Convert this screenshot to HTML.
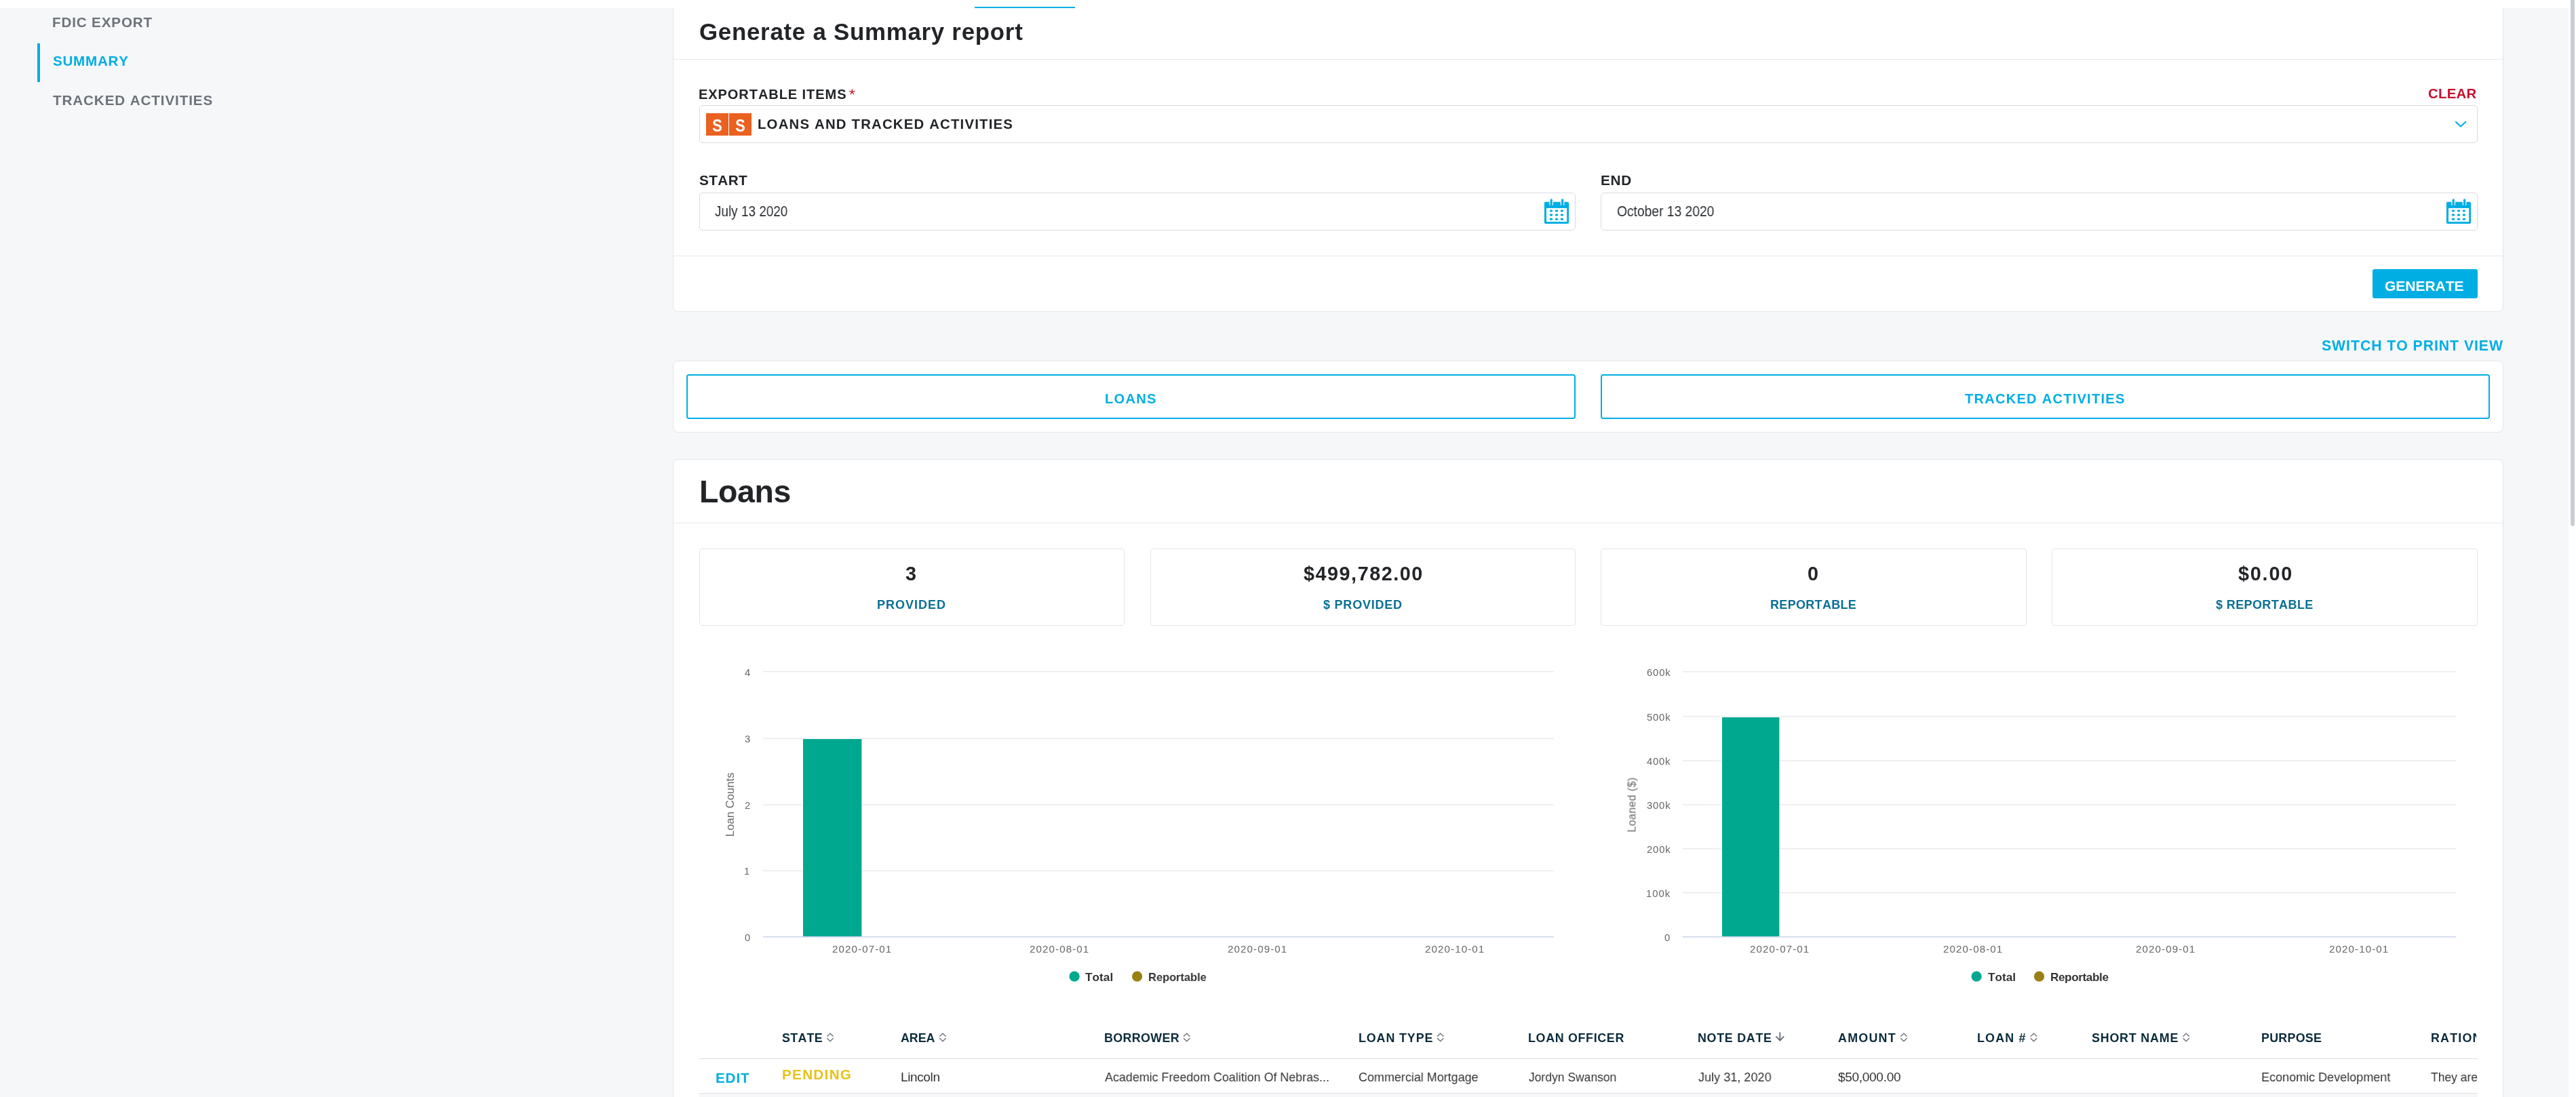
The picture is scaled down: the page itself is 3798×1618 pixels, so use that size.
<!DOCTYPE html>
<html><head><meta charset="utf-8"><title>Summary report</title>
<style>
html,body{margin:0;padding:0;}
body{width:3798px;height:1618px;overflow:hidden;position:relative;background:#f6f7f9;font-family:"Liberation Sans",sans-serif;}
.b{position:absolute;box-sizing:border-box;}
.t{position:absolute;white-space:nowrap;font-kerning:none;will-change:transform;}
</style></head><body>
<div class="b" style="left:0px;top:0px;width:3787px;height:12px;background:#fff;z-index:5"></div>
<div class="b" style="left:1437px;top:10px;width:148px;height:2px;background:#00aee3;z-index:6"></div>
<div class="b" style="left:3787px;top:0px;width:11px;height:1618px;background:#fff;z-index:5"></div>
<div class="b" style="left:3790px;top:0px;width:6px;height:776px;background:#c8cdd4;border-radius:0 0 3px 3px;z-index:6"></div>
<div class="b" style="left:55px;top:64px;width:4px;height:57px;background:#00aee3"></div>
<div class="t" style="left:77.32px;top:22.82px;font-size:20.64px;line-height:20.64px;letter-spacing:0.855px;font-weight:700;color:#6d737a;">FDIC EXPORT</div>
<div class="t" style="left:78.11px;top:79.72px;font-size:20.64px;line-height:20.64px;letter-spacing:0.732px;font-weight:700;color:#00aee3;">SUMMARY</div>
<div class="t" style="left:78.47px;top:137.72px;font-size:20.64px;line-height:20.64px;letter-spacing:0.893px;font-weight:700;color:#6d737a;">TRACKED ACTIVITIES</div>
<div class="b" style="left:992px;top:-20px;width:2699px;height:480px;background:#fff;border:1px solid #e3e5e9;border-radius:8px"></div>
<div class="t" style="left:1030.57px;top:30.26px;font-size:34.88px;line-height:34.88px;letter-spacing:0.724px;font-weight:700;color:#222427;">Generate a Summary report</div>
<div class="b" style="left:993px;top:87px;width:2697px;height:1px;background:#e6e8eb"></div>
<div class="t" style="left:1029.96px;top:128.82px;font-size:20.06px;line-height:20.06px;letter-spacing:0.912px;font-weight:700;color:#222427;">EXPORTABLE ITEMS</div>
<svg class="b" style="left:0;top:0" width="3798" height="200"><line x1="1256.30" y1="135.60" x2="1256.30" y2="131.70" stroke="#c8102e" stroke-width="1.25" stroke-linecap="round"/><line x1="1256.30" y1="135.60" x2="1260.01" y2="134.39" stroke="#c8102e" stroke-width="1.25" stroke-linecap="round"/><line x1="1256.30" y1="135.60" x2="1258.59" y2="138.76" stroke="#c8102e" stroke-width="1.25" stroke-linecap="round"/><line x1="1256.30" y1="135.60" x2="1254.01" y2="138.76" stroke="#c8102e" stroke-width="1.25" stroke-linecap="round"/><line x1="1256.30" y1="135.60" x2="1252.59" y2="134.39" stroke="#c8102e" stroke-width="1.25" stroke-linecap="round"/></svg>
<div class="t" style="left:3580.17px;top:127.97px;font-size:20.35px;line-height:20.35px;letter-spacing:0.291px;font-weight:700;color:#c8102e;">CLEAR</div>
<div class="b" style="left:1031px;top:155px;width:2622px;height:56px;background:#fff;border:1px solid #d7dbe0;border-radius:5px"></div>
<div class="b" style="left:1041px;top:167px;width:33px;height:33px;background:#ea6120"></div>
<div class="b" style="left:1075px;top:167px;width:33px;height:33px;background:#ea6120"></div>
<div class="t" style="left:1050.17px;top:173.06px;font-size:25.44px;line-height:25.44px;font-weight:700;color:#fff;transform-origin:0.73px 0;transform:scaleX(0.866)">S</div>
<div class="t" style="left:1084.17px;top:173.06px;font-size:25.44px;line-height:25.44px;font-weight:700;color:#fff;transform-origin:0.73px 0;transform:scaleX(0.866)">S</div>
<div class="t" style="left:1117.24px;top:172.97px;font-size:20.35px;line-height:20.35px;letter-spacing:1.195px;font-weight:700;color:#222427;">LOANS AND TRACKED ACTIVITIES</div>
<svg class="b" style="left:3615px;top:174px" width="26" height="18"><polyline points="6,6 13,12.5 20,6" fill="none" stroke="#00aee3" stroke-width="2.2" stroke-linecap="round" stroke-linejoin="round"/></svg>
<div class="t" style="left:1030.80px;top:255.80px;font-size:20.79px;line-height:20.79px;letter-spacing:0.361px;font-weight:700;color:#222427;">START</div>
<div class="t" style="left:2359.91px;top:255.80px;font-size:20.79px;line-height:20.79px;letter-spacing:0.739px;font-weight:700;color:#222427;">END</div>
<div class="b" style="left:1031px;top:284px;width:1292px;height:56px;background:#fff;border:1px solid #d7dbe0;border-radius:5px"></div>
<div class="b" style="left:2360px;top:284px;width:1293px;height:56px;background:#fff;border:1px solid #d7dbe0;border-radius:5px"></div>
<div class="t" style="left:1054.40px;top:301.33px;font-size:21.22px;line-height:21.22px;font-weight:400;color:#2a2d31;transform-origin:0 0;transform:scaleX(0.8919);">July 13 2020</div>
<div class="t" style="left:2383.69px;top:301.33px;font-size:21.22px;line-height:21.22px;font-weight:400;color:#2a2d31;transform-origin:0 0;transform:scaleX(0.9068);">October 13 2020</div>
<svg class="b" style="left:2276px;top:292px" width="40" height="40" viewBox="0 0 40 40">
<path d="M3,5.8 L35,5.8 Q37.1,5.8 37.1,7.9 L37.1,35.9 Q37.1,38 35,38 L3,38 Q0.9,38 0.9,35.9 L0.9,7.9 Q0.9,5.8 3,5.8 Z M4,15 L4,35 L34.2,35 L34.2,15 Z" fill="#00aee3" fill-rule="evenodd"/>
<rect x="8.4" y="5" width="5.6" height="5.8" fill="#fff"/>
<rect x="24.8" y="5" width="5.6" height="5.8" fill="#fff"/>
<path d="M9.6,12 L9.6,2.9 Q9.6,1.3 11.2,1.3 Q12.8,1.3 12.8,2.9 L12.8,12 Z" fill="#00aee3"/>
<path d="M26,12 L26,2.9 Q26,1.3 27.6,1.3 Q29.2,1.3 29.2,2.9 L29.2,12 Z" fill="#00aee3"/>
<ellipse cx="11" cy="18.9" rx="2.3" ry="1.7" fill="#00aee3"/><ellipse cx="19" cy="18.9" rx="2.3" ry="1.7" fill="#00aee3"/><ellipse cx="26.9" cy="18.9" rx="2.3" ry="1.7" fill="#00aee3"/><ellipse cx="11" cy="25" rx="2.3" ry="1.7" fill="#00aee3"/><ellipse cx="19" cy="25" rx="2.3" ry="1.7" fill="#00aee3"/><ellipse cx="26.9" cy="25" rx="2.3" ry="1.7" fill="#00aee3"/><ellipse cx="11" cy="31.2" rx="2.3" ry="1.7" fill="#00aee3"/><ellipse cx="19" cy="31.2" rx="2.3" ry="1.7" fill="#00aee3"/><ellipse cx="26.9" cy="31.2" rx="2.3" ry="1.7" fill="#00aee3"/></svg>
<svg class="b" style="left:3606px;top:292px" width="40" height="40" viewBox="0 0 40 40">
<path d="M3,5.8 L35,5.8 Q37.1,5.8 37.1,7.9 L37.1,35.9 Q37.1,38 35,38 L3,38 Q0.9,38 0.9,35.9 L0.9,7.9 Q0.9,5.8 3,5.8 Z M4,15 L4,35 L34.2,35 L34.2,15 Z" fill="#00aee3" fill-rule="evenodd"/>
<rect x="8.4" y="5" width="5.6" height="5.8" fill="#fff"/>
<rect x="24.8" y="5" width="5.6" height="5.8" fill="#fff"/>
<path d="M9.6,12 L9.6,2.9 Q9.6,1.3 11.2,1.3 Q12.8,1.3 12.8,2.9 L12.8,12 Z" fill="#00aee3"/>
<path d="M26,12 L26,2.9 Q26,1.3 27.6,1.3 Q29.2,1.3 29.2,2.9 L29.2,12 Z" fill="#00aee3"/>
<ellipse cx="11" cy="18.9" rx="2.3" ry="1.7" fill="#00aee3"/><ellipse cx="19" cy="18.9" rx="2.3" ry="1.7" fill="#00aee3"/><ellipse cx="26.9" cy="18.9" rx="2.3" ry="1.7" fill="#00aee3"/><ellipse cx="11" cy="25" rx="2.3" ry="1.7" fill="#00aee3"/><ellipse cx="19" cy="25" rx="2.3" ry="1.7" fill="#00aee3"/><ellipse cx="26.9" cy="25" rx="2.3" ry="1.7" fill="#00aee3"/><ellipse cx="11" cy="31.2" rx="2.3" ry="1.7" fill="#00aee3"/><ellipse cx="19" cy="31.2" rx="2.3" ry="1.7" fill="#00aee3"/><ellipse cx="26.9" cy="31.2" rx="2.3" ry="1.7" fill="#00aee3"/></svg>
<div class="b" style="left:993px;top:377px;width:2697px;height:1px;background:#e6e8eb"></div>
<div class="b" style="left:3498px;top:397px;width:155px;height:43px;background:#00aee3;border-radius:3px"></div>
<div class="t" style="left:3515.94px;top:410.56px;font-size:21.08px;line-height:21.08px;letter-spacing:-0.088px;font-weight:700;color:#fff;">GENERATE</div>
<div class="t" style="left:3422.59px;top:498.53px;font-size:21.22px;line-height:21.22px;letter-spacing:0.962px;font-weight:700;color:#00aee3;">SWITCH TO PRINT VIEW</div>
<div class="b" style="left:992px;top:532px;width:2699px;height:106px;background:#fff;border:1px solid #e3e5e9;border-radius:8px"></div>
<div class="b" style="left:1012px;top:552px;width:1311px;height:66px;border:2px solid #00aee3;border-radius:4px"></div>
<div class="b" style="left:2360px;top:552px;width:1311px;height:66px;border:2px solid #00aee3;border-radius:4px"></div>
<div class="t" style="left:1628.66px;top:577.92px;font-size:20.06px;line-height:20.06px;letter-spacing:1.330px;font-weight:700;color:#00aee3;">LOANS</div>
<div class="t" style="left:2897.37px;top:577.92px;font-size:20.06px;line-height:20.06px;letter-spacing:1.261px;font-weight:700;color:#00aee3;">TRACKED ACTIVITIES</div>
<div class="b" style="left:992px;top:677px;width:2699px;height:1023px;background:#fff;border:1px solid #e3e5e9;border-radius:8px"></div>
<div class="t" style="left:1030.89px;top:701.62px;font-size:46.51px;line-height:46.51px;letter-spacing:-0.363px;font-weight:700;color:#222427;">Loans</div>
<div class="b" style="left:993px;top:771px;width:2697px;height:1px;background:#e6e8eb"></div>
<div class="b" style="left:1031px;top:809px;width:627px;height:114px;border:1px solid #e3e5e9;border-radius:4px"></div>
<div class="b" style="left:1696px;top:809px;width:627px;height:114px;border:1px solid #e3e5e9;border-radius:4px"></div>
<div class="b" style="left:2360px;top:809px;width:628px;height:114px;border:1px solid #e3e5e9;border-radius:4px"></div>
<div class="b" style="left:3025px;top:809px;width:628px;height:114px;border:1px solid #e3e5e9;border-radius:4px"></div>
<div class="t" style="left:1335.34px;top:831.53px;font-size:28.78px;line-height:28.78px;letter-spacing:0.000px;font-weight:700;color:#222427;">3</div>
<div class="t" style="left:1922.02px;top:831.53px;font-size:28.78px;line-height:28.78px;letter-spacing:1.532px;font-weight:700;color:#222427;">$499,782.00</div>
<div class="t" style="left:2664.56px;top:831.53px;font-size:28.78px;line-height:28.78px;letter-spacing:0.000px;font-weight:700;color:#222427;">0</div>
<div class="t" style="left:3299.62px;top:831.53px;font-size:28.78px;line-height:28.78px;letter-spacing:1.810px;font-weight:700;color:#222427;">$0.00</div>
<div class="t" style="left:1292.79px;top:882.84px;font-size:18.02px;line-height:18.02px;letter-spacing:0.975px;font-weight:700;color:#0a7094;">PROVIDED</div>
<div class="t" style="left:1950.56px;top:882.84px;font-size:18.02px;line-height:18.02px;letter-spacing:0.769px;font-weight:700;color:#0a7094;">$ PROVIDED</div>
<div class="t" style="left:2609.69px;top:882.84px;font-size:18.02px;line-height:18.02px;letter-spacing:0.305px;font-weight:700;color:#0a7094;">REPORTABLE</div>
<div class="t" style="left:3267.16px;top:882.84px;font-size:18.02px;line-height:18.02px;letter-spacing:0.377px;font-weight:700;color:#0a7094;">$ REPORTABLE</div>
<svg class="b" style="left:0;top:0" width="3798" height="1618"><rect x="1125" y="989.95" width="1166" height="1.3" fill="#e8e8e8"/><rect x="1125" y="1088.55" width="1166" height="1.3" fill="#e8e8e8"/><rect x="1125" y="1186.35" width="1166" height="1.3" fill="#e8e8e8"/><rect x="1125" y="1283.65" width="1166" height="1.3" fill="#e8e8e8"/><rect x="1182.8" y="1089" width="88.4" height="292" fill="#fff"/><rect x="1184" y="1090" width="86.4" height="291" fill="#00a88f"/><rect x="1125" y="1381" width="1166" height="1.6" fill="#ccd6eb"/><circle cx="1584.1" cy="1440.2" r="7.6" fill="#00a88f"/><circle cx="1676.6" cy="1440.2" r="7.6" fill="#9a7f12"/></svg>
<svg class="b" style="left:0;top:0" width="3798" height="1618"><rect x="2481" y="990.15" width="1140" height="1.3" fill="#e8e8e8"/><rect x="2481" y="1056.15" width="1140" height="1.3" fill="#e8e8e8"/><rect x="2481" y="1121.25" width="1140" height="1.3" fill="#e8e8e8"/><rect x="2481" y="1186.25" width="1140" height="1.3" fill="#e8e8e8"/><rect x="2481" y="1251.05" width="1140" height="1.3" fill="#e8e8e8"/><rect x="2481" y="1316.05" width="1140" height="1.3" fill="#e8e8e8"/><rect x="2537.8" y="1057" width="86.4" height="324" fill="#fff"/><rect x="2539" y="1058" width="84.4" height="323" fill="#00a88f"/><rect x="2481" y="1381" width="1140" height="1.6" fill="#ccd6eb"/><circle cx="2914.1" cy="1440.2" r="7.6" fill="#00a88f"/><circle cx="3006.5" cy="1440.2" r="7.6" fill="#9a7f12"/></svg>
<div class="t" style="left:1098.02px;top:1375.95px;font-size:14.83px;line-height:14.83px;letter-spacing:0.000px;font-weight:400;color:#666666;">0</div>
<div class="t" style="left:1097.47px;top:1278.45px;font-size:14.83px;line-height:14.83px;letter-spacing:0.000px;font-weight:400;color:#666666;">1</div>
<div class="t" style="left:1097.85px;top:1180.95px;font-size:14.83px;line-height:14.83px;letter-spacing:0.000px;font-weight:400;color:#666666;">2</div>
<div class="t" style="left:1098.04px;top:1083.45px;font-size:14.83px;line-height:14.83px;letter-spacing:0.000px;font-weight:400;color:#666666;">3</div>
<div class="t" style="left:1098.26px;top:985.05px;font-size:14.83px;line-height:14.83px;letter-spacing:0.000px;font-weight:400;color:#666666;">4</div>
<div class="t" style="left:2454.12px;top:1376.05px;font-size:14.83px;line-height:14.83px;letter-spacing:0.000px;font-weight:400;color:#666666;">0</div>
<div class="t" style="left:2427.27px;top:1311.05px;font-size:14.83px;line-height:14.83px;letter-spacing:0.986px;font-weight:400;color:#666666;">100k</div>
<div class="t" style="left:2427.65px;top:1246.05px;font-size:14.83px;line-height:14.83px;letter-spacing:0.858px;font-weight:400;color:#666666;">200k</div>
<div class="t" style="left:2427.84px;top:1181.35px;font-size:14.83px;line-height:14.83px;letter-spacing:0.798px;font-weight:400;color:#666666;">300k</div>
<div class="t" style="left:2428.06px;top:1116.35px;font-size:14.83px;line-height:14.83px;letter-spacing:0.723px;font-weight:400;color:#666666;">400k</div>
<div class="t" style="left:2427.81px;top:1051.45px;font-size:14.83px;line-height:14.83px;letter-spacing:0.808px;font-weight:400;color:#666666;">500k</div>
<div class="t" style="left:2427.65px;top:985.45px;font-size:14.83px;line-height:14.83px;letter-spacing:0.861px;font-weight:400;color:#666666;">600k</div>
<div class="t" style="left:1226.84px;top:1391.70px;font-size:15.12px;line-height:15.12px;letter-spacing:1.108px;font-weight:400;color:#666666;">2020-07-01</div>
<div class="t" style="left:1518.14px;top:1391.70px;font-size:15.12px;line-height:15.12px;letter-spacing:1.108px;font-weight:400;color:#666666;">2020-08-01</div>
<div class="t" style="left:1809.54px;top:1391.70px;font-size:15.12px;line-height:15.12px;letter-spacing:1.108px;font-weight:400;color:#666666;">2020-09-01</div>
<div class="t" style="left:2100.84px;top:1391.70px;font-size:15.12px;line-height:15.12px;letter-spacing:1.108px;font-weight:400;color:#666666;">2020-10-01</div>
<div class="t" style="left:2579.84px;top:1391.70px;font-size:15.12px;line-height:15.12px;letter-spacing:1.108px;font-weight:400;color:#666666;">2020-07-01</div>
<div class="t" style="left:2864.54px;top:1391.70px;font-size:15.12px;line-height:15.12px;letter-spacing:1.108px;font-weight:400;color:#666666;">2020-08-01</div>
<div class="t" style="left:3149.14px;top:1391.70px;font-size:15.12px;line-height:15.12px;letter-spacing:1.108px;font-weight:400;color:#666666;">2020-09-01</div>
<div class="t" style="left:3433.84px;top:1391.70px;font-size:15.12px;line-height:15.12px;letter-spacing:1.108px;font-weight:400;color:#666666;">2020-10-01</div>
<div class="t" style="left:1082.50px;top:1220.23px;font-size:16.57px;line-height:16.57px;letter-spacing:0.049px;font-weight:400;color:#666666;transform-origin:0 14.03px;transform:rotate(-90deg)">Loan Counts</div>
<div class="t" style="left:2411.50px;top:1213.67px;font-size:15.99px;line-height:15.99px;letter-spacing:0.385px;font-weight:400;color:#666666;transform-origin:0 13.54px;transform:rotate(-90deg)">Loaned ($)</div>
<div class="t" style="left:1600.31px;top:1432.58px;font-size:17.15px;line-height:17.15px;letter-spacing:0.059px;font-weight:700;color:#333;">Total</div>
<div class="t" style="left:1692.80px;top:1432.58px;font-size:17.15px;line-height:17.15px;font-weight:700;color:#333;transform-origin:0 0;transform:scaleX(0.9573);">Reportable</div>
<div class="t" style="left:2930.61px;top:1432.58px;font-size:17.15px;line-height:17.15px;letter-spacing:0.009px;font-weight:700;color:#333;">Total</div>
<div class="t" style="left:3022.85px;top:1432.58px;font-size:17.15px;line-height:17.15px;letter-spacing:-0.395px;font-weight:700;color:#333;">Reportable</div>
<div class="t" style="left:1152.98px;top:1522.66px;font-size:17.88px;line-height:17.88px;letter-spacing:0.278px;font-weight:700;color:#0b2b3b;">STATE</div>
<div class="t" style="left:1328.35px;top:1522.66px;font-size:17.88px;line-height:17.88px;letter-spacing:-0.080px;font-weight:700;color:#0b2b3b;">AREA</div>
<div class="t" style="left:1627.50px;top:1522.66px;font-size:17.88px;line-height:17.88px;letter-spacing:0.372px;font-weight:700;color:#0b2b3b;">BORROWER</div>
<div class="t" style="left:2003.10px;top:1522.66px;font-size:17.88px;line-height:17.88px;letter-spacing:0.898px;font-weight:700;color:#0b2b3b;">LOAN TYPE</div>
<div class="t" style="left:2252.80px;top:1522.66px;font-size:17.88px;line-height:17.88px;letter-spacing:0.671px;font-weight:700;color:#0b2b3b;">LOAN OFFICER</div>
<div class="t" style="left:2503.10px;top:1522.66px;font-size:17.88px;line-height:17.88px;letter-spacing:0.725px;font-weight:700;color:#0b2b3b;">NOTE DATE</div>
<div class="t" style="left:2709.95px;top:1522.66px;font-size:17.88px;line-height:17.88px;letter-spacing:1.237px;font-weight:700;color:#0b2b3b;">AMOUNT</div>
<div class="t" style="left:2915.10px;top:1522.66px;font-size:17.88px;line-height:17.88px;letter-spacing:1.165px;font-weight:700;color:#0b2b3b;">LOAN #</div>
<div class="t" style="left:3084.18px;top:1522.66px;font-size:17.88px;line-height:17.88px;letter-spacing:0.804px;font-weight:700;color:#0b2b3b;">SHORT NAME</div>
<div class="t" style="left:3333.80px;top:1522.66px;font-size:17.88px;line-height:17.88px;letter-spacing:0.261px;font-weight:700;color:#0b2b3b;">PURPOSE</div>
<div class="b" style="left:3570px;top:1515px;width:81px;height:30px;overflow:hidden">
<div class="t" style="left:13.70px;top:7.66px;font-size:17.88px;line-height:17.88px;letter-spacing:1.181px;font-weight:700;color:#0b2b3b;">RATIONALE</div>
</div>
<svg class="b" style="left:0;top:0" width="3798" height="1618"><polyline points="1219.3,1528.8 1224.0,1524.3 1228.7,1528.8" fill="none" stroke="#6f747b" stroke-width="1.4"/><polyline points="1219.3,1531.2 1224.0,1535.7 1228.7,1531.2" fill="none" stroke="#6f747b" stroke-width="1.4"/><polyline points="1385.3,1528.8 1390.0,1524.3 1394.7,1528.8" fill="none" stroke="#6f747b" stroke-width="1.4"/><polyline points="1385.3,1531.2 1390.0,1535.7 1394.7,1531.2" fill="none" stroke="#6f747b" stroke-width="1.4"/><polyline points="1745.0,1528.8 1749.7,1524.3 1754.4,1528.8" fill="none" stroke="#6f747b" stroke-width="1.4"/><polyline points="1745.0,1531.2 1749.7,1535.7 1754.4,1531.2" fill="none" stroke="#6f747b" stroke-width="1.4"/><polyline points="2119.0,1528.8 2123.7,1524.3 2128.4,1528.8" fill="none" stroke="#6f747b" stroke-width="1.4"/><polyline points="2119.0,1531.2 2123.7,1535.7 2128.4,1531.2" fill="none" stroke="#6f747b" stroke-width="1.4"/><polyline points="2802.2,1528.8 2806.9,1524.3 2811.6,1528.8" fill="none" stroke="#6f747b" stroke-width="1.4"/><polyline points="2802.2,1531.2 2806.9,1535.7 2811.6,1531.2" fill="none" stroke="#6f747b" stroke-width="1.4"/><polyline points="2993.8,1528.8 2998.5,1524.3 3003.2,1528.8" fill="none" stroke="#6f747b" stroke-width="1.4"/><polyline points="2993.8,1531.2 2998.5,1535.7 3003.2,1531.2" fill="none" stroke="#6f747b" stroke-width="1.4"/><polyline points="3218.5,1528.8 3223.2,1524.3 3227.9,1528.8" fill="none" stroke="#6f747b" stroke-width="1.4"/><polyline points="3218.5,1531.2 3223.2,1535.7 3227.9,1531.2" fill="none" stroke="#6f747b" stroke-width="1.4"/><line x1="2624.3" y1="1522.5" x2="2624.3" y2="1534.5" stroke="#6b7079" stroke-width="1.9"/><polyline points="2618.4,1528.6 2624.3,1534.6 2630.2,1528.6" fill="none" stroke="#6b7079" stroke-width="1.9"/></svg>
<div class="b" style="left:1031px;top:1561px;width:2622px;height:1px;background:#d9dde3"></div>
<div class="b" style="left:1031px;top:1612px;width:2622px;height:1px;background:#dfe2e7"></div>
<div class="b" style="left:1031px;top:1613px;width:2622px;height:5px;background:#f6f7f9"></div>
<div class="t" style="left:1054.62px;top:1579.62px;font-size:20.64px;line-height:20.64px;letter-spacing:0.863px;font-weight:700;color:#00aee3;">EDIT</div>
<div class="t" style="left:1152.62px;top:1574.72px;font-size:20.64px;line-height:20.64px;letter-spacing:1.320px;font-weight:700;color:#e8c21a;">PENDING</div>
<div class="t" style="left:1328.24px;top:1578.98px;font-size:19.04px;line-height:19.04px;letter-spacing:-0.390px;font-weight:400;color:#333333;">Lincoln</div>
<div class="t" style="left:1628.67px;top:1578.98px;font-size:19.04px;line-height:19.04px;font-weight:400;color:#333333;transform-origin:0 0;transform:scaleX(0.9395);">Academic Freedom Coalition Of Nebras...</div>
<div class="t" style="left:2003.39px;top:1578.98px;font-size:19.04px;line-height:19.04px;font-weight:400;color:#333333;transform-origin:0 0;transform:scaleX(0.9435);">Commercial Mortgage</div>
<div class="t" style="left:2253.73px;top:1578.98px;font-size:19.04px;line-height:19.04px;font-weight:400;color:#333333;transform-origin:0 0;transform:scaleX(0.9193);">Jordyn Swanson</div>
<div class="t" style="left:2504.02px;top:1578.98px;font-size:19.04px;line-height:19.04px;font-weight:400;color:#333333;transform-origin:0 0;transform:scaleX(0.9507);">July 31, 2020</div>
<div class="t" style="left:2710.20px;top:1578.98px;font-size:19.04px;line-height:19.04px;letter-spacing:-0.306px;font-weight:400;color:#333333;">$50,000.00</div>
<div class="t" style="left:3333.52px;top:1578.98px;font-size:19.04px;line-height:19.04px;font-weight:400;color:#333333;transform-origin:0 0;transform:scaleX(0.9469);">Economic Development</div>
<div class="t" style="left:3584.41px;top:1578.98px;font-size:19.04px;line-height:19.04px;font-weight:400;color:#333333;transform-origin:0 0;transform:scaleX(0.9192);">They are</div>
</body></html>
